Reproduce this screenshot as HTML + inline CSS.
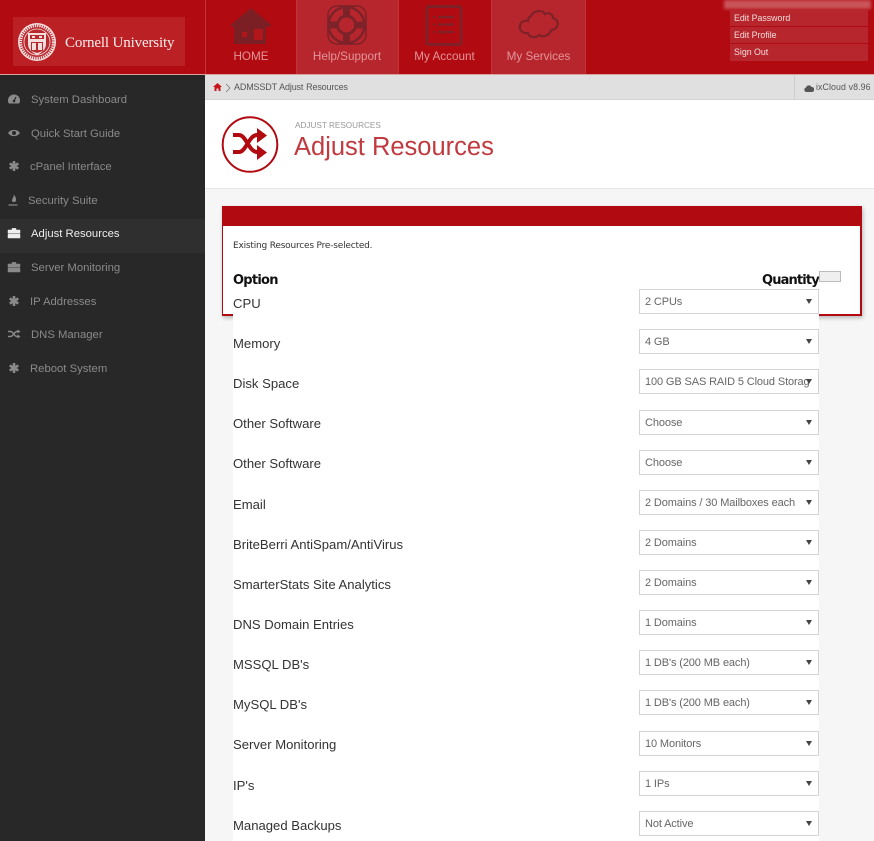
<!DOCTYPE html>
<html><head><meta charset="utf-8">
<style>
html,body{margin:0;padding:0}
body{width:874px;height:841px;position:relative;overflow:hidden;background:#f6f6f6;font-family:"Liberation Sans",sans-serif}
.a{position:absolute}
.t{position:absolute;white-space:nowrap}
.nav{position:absolute;top:0;height:74px;border-left:1px solid #c2343a;box-sizing:border-box}
.navl{position:absolute;top:49px;width:100%;text-align:center;font-size:11.7px;color:#e2969a;line-height:14px}
.side{position:absolute;left:0;width:205px;height:34px;font-size:11.3px;line-height:34px;color:#8a8a8a}
.side span{position:absolute;left:31px;top:0;white-space:nowrap}
.side svg{position:absolute;left:7px;top:9px}
.lab{position:absolute;left:233px;font-size:13.1px;line-height:16px;color:#333;white-space:nowrap}
.sel{position:absolute;left:639px;width:180px;height:25px;box-sizing:border-box;background:#fff;border:1px solid #d4d4d4;font-size:11px;line-height:24px;color:#666;padding-left:5px;letter-spacing:-.12px;white-space:nowrap;overflow:hidden}
.sel:after{content:"";position:absolute;right:6px;top:9px;border-left:3px solid transparent;border-right:3px solid transparent;border-top:5px solid #444}
.um{position:absolute;left:730px;width:138px;height:16px;background:#b6262c;color:#f3dcdc;font-size:8.800px;line-height:17px;text-indent:4px}
</style></head><body>

<!-- header -->
<div class="a" style="left:0;top:0;width:874px;height:75px;background:#b10a10;border-bottom:1px solid #d9a0a0;box-sizing:border-box"></div>
<div class="a" style="left:13px;top:17px;width:172px;height:49px;background:#ba2024"></div>
<svg class="a" style="left:17px;top:22px" width="40" height="40" viewBox="0 0 40 40">
<circle cx="20" cy="20" r="19" fill="#f3dede"/><circle cx="20" cy="20" r="17.6" fill="#b9282c"/><circle cx="20" cy="20" r="16.6" fill="none" stroke="#f3dede" stroke-width="3.4" stroke-dasharray="1.4 .9"/>
<circle cx="20" cy="20" r="13" fill="#b9282c" stroke="#f3dede" stroke-width=".8"/>
<path d="M11 11H29V22C29 28 24 31 20 33C16 31 11 28 11 22Z" fill="#f3dede"/>
<path d="M13 13H27V17H13ZM14 20H26V29L20 31L14 29Z" fill="#b9282c"/>
<path d="M15 14H18V16H15ZM22 14H25V16H22ZM15 21H19V28H15ZM21 21H25V28H21Z" fill="#f3dede"/>
</svg>
<div class="t" style="left:65px;top:35px;font-family:'Liberation Serif',serif;font-size:15px;line-height:17px;color:#fbeeee;letter-spacing:-.15px">Cornell University</div>

<div class="nav" style="left:205px;width:91px"></div>
<div class="navl" style="left:205px;width:91px;top:50px;text-indent:1px">HOME</div>
<svg class="a" style="left:230px;top:8px" width="43" height="38" viewBox="0 0 43 38">
<path d="M21 0L42 17.500L38 19H36V36H4V19H3L0 17.500Z" fill="#7c1f25"/>
<rect x="12" y="24" width="5" height="5" fill="#b1161b"/><rect x="24" y="21" width="9" height="11" fill="#b1161b"/>
</svg>

<div class="nav" style="left:296px;width:102px;background:#b7262c"></div>
<div class="navl" style="left:296px;width:102px;top:50px">Help/Support</div>
<svg class="a" style="left:326px;top:4px" width="42" height="42" viewBox="0 0 42 42" fill="none" stroke="#7c2228">
<rect x="2" y="2" width="38" height="38" rx="9" stroke-width="1.500"/>
<circle cx="20.500" cy="21" r="18" stroke-width="2.500"/><circle cx="20.500" cy="21" r="9" stroke-width="3"/>
<path d="M20.500 3V12M20.500 30V39M3 21H11.500M29.500 21H38" stroke-width="7"/>
</svg>

<div class="nav" style="left:398px;width:93px"></div>
<div class="navl" style="left:398px;width:93px;top:50px">My Account</div>
<svg class="a" style="left:425px;top:5px" width="38" height="42" viewBox="0 0 38 42" fill="none" stroke="#7c2228">
<rect x="2" y="1.500" width="34" height="38" rx="2" stroke-width="2.800"/>
<path d="M13 12H29M13 19.500H29M13 27H29" stroke-width="2.200"/>
<path d="M8 12H10.500M8 19.500H10.500M8 27H10.500" stroke-width="2"/>
</svg>

<div class="nav" style="left:491px;width:95px;background:#b7262c;border-right:1px solid #c2343a"></div>
<div class="navl" style="left:491px;width:95px;top:50px">My Services</div>
<svg class="a" style="left:518px;top:9px" width="42" height="30" viewBox="0 0 42 30" fill="none" stroke="#7c2228" stroke-width="2.200">
<path d="M13 7C15 2 24 0 27 5C31 3 35 5 35 9C39 10 41 14 39 17C38 20 35 21 33 21C32 26 25 29 21 26C17 30 11 28 10 24C5 25 1 21 2 17C2 13 7 11 10 12C10 10 11 8 13 7Z"/>
</svg>

<div class="a" style="left:724px;top:0;width:147px;height:9px;background:#c9555a;filter:blur(1.500px)"></div>
<div class="um" style="top:10px">Edit Password</div>
<div class="um" style="top:27px">Edit Profile</div>
<div class="um" style="top:44px;height:17px">Sign Out</div>

<!-- breadcrumb -->
<div class="a" style="left:205px;top:75px;width:669px;height:25px;background:#e0e0e0;border-bottom:1px solid #d2d2d2;box-sizing:border-box"></div>
<svg class="a" style="left:213px;top:83px" width="9" height="8" viewBox="0 0 9 8"><path d="M4.500 0L9 4H7.500V8H5.500V5.500H3.500V8H1.500V4H0Z" fill="#c8141a"/></svg>
<svg class="a" style="left:225px;top:83px" width="6" height="10" viewBox="0 0 6 10"><path d="M1 1L5 5L1 9" fill="none" stroke="#777" stroke-width=".8"/></svg>
<div class="t" style="left:234px;top:81px;font-size:9px;line-height:13px;color:#555;letter-spacing:-.15px;word-spacing:.5px">ADMSSDT Adjust Resources</div>
<div class="a" style="left:794px;top:75px;width:1px;height:24px;background:#cecece"></div>
<svg class="a" style="left:804px;top:84px" width="10" height="8" viewBox="0 0 10 8"><path d="M2.500 8A2.300 2.300 0 0 1 2 3.500A3 3 0 0 1 7.500 3A2.500 2.500 0 0 1 8 8Z" fill="#555"/></svg>
<div class="t" style="left:816px;top:81px;font-size:8.800px;line-height:13px;color:#555;letter-spacing:.1px">ixCloud v8.96</div>

<!-- title band -->
<div class="a" style="left:205px;top:100px;width:669px;height:89px;background:#fff;border-bottom:1px solid #e6e6e6;box-sizing:border-box"></div>
<svg class="a" style="left:221px;top:116px" width="58" height="58" viewBox="0 0 58 58" fill="none" stroke="#b10a10">
<circle cx="29" cy="28.500" r="27.300" stroke-width="2"/>
<path d="M12 19H18C25 19 28 36 36 36H38M12 36H18C25 36 28 19 36 19H38" stroke-width="4"/>
<path d="M36 12L46 19.500L36 27ZM36 29L46 36.500L36 44Z" fill="#b10a10" stroke="none"/>
</svg>
<div class="t" style="left:295px;top:120px;font-size:8.200px;line-height:12px;color:#999">ADJUST RESOURCES</div>
<div class="t" style="left:294px;top:131px;font-size:25.500px;line-height:32px;color:#c03a40;font-weight:normal">Adjust Resources</div>

<!-- sidebar -->
<div class="a" style="left:0;top:75px;width:205px;height:766px;background:#282828"></div>
<div class="a" style="left:0;top:75px;width:205px;height:5px;background:#252525"></div>
<div class="a" style="left:0;top:219px;width:205px;height:34px;background:#2f2f2f"></div>

<div class="side" style="top:83px"><svg width="14" height="14" viewBox="0 0 14 14"><path d="M7 2.500A6 6 0 0 0 1 9C1 10 1.500 11 2 11.500H12C12.500 11 13 10 13 9A6 6 0 0 0 7 2.500Z" fill="#8a8a8a"/><path d="M7 9L9 5" stroke="#282828" stroke-width="1.200"/><circle cx="7" cy="9" r="1.300" fill="#282828"/></svg><span>System Dashboard</span></div>
<div class="side" style="top:117px"><svg width="14" height="14" viewBox="0 0 14 14"><path d="M1 7C4 2.800 10 2.800 13 7C10 11.200 4 11.200 1 7Z" fill="#8a8a8a"/><circle cx="7" cy="7" r="2" fill="#282828"/></svg><span>Quick Start Guide</span></div>
<div class="side" style="top:150px"><svg width="14" height="14" viewBox="0 0 14 14" stroke="#8a8a8a" stroke-width="2.600"><path d="M7 2V12M2.700 4.500L11.300 9.500M11.300 4.500L2.700 9.500"/></svg><span style="left:30px">cPanel Interface</span></div>
<div class="side" style="top:184px"><svg width="14" height="14" viewBox="0 0 14 14"><path d="M7 1.500C8 3.500 9.500 5 9 7.500C8.700 9.500 5.500 9.500 5 8C4.700 6.500 6.500 4.500 7 1.500Z" fill="#8a8a8a"/><path d="M1.500 12H10.500" stroke="#8a8a8a" stroke-width="1.200"/></svg><span style="left:28px">Security Suite</span></div>
<div class="side" style="top:217px;color:#eee"><svg width="14" height="14" viewBox="0 0 14 14"><path d="M1 4H13V7.400H1ZM1 8.300H13V12H1ZM5 4V2.400H9V4" fill="#eee" stroke="#eee" stroke-width=".5"/></svg><span>Adjust Resources</span></div>
<div class="side" style="top:251px"><svg width="14" height="14" viewBox="0 0 14 14"><path d="M1 4H13V7.400H1ZM1 8.300H13V12H1ZM5 4V2.400H9V4" fill="#8a8a8a" stroke="#8a8a8a" stroke-width=".5"/></svg><span>Server Monitoring</span></div>
<div class="side" style="top:285px"><svg width="14" height="14" viewBox="0 0 14 14" stroke="#8a8a8a" stroke-width="2.600"><path d="M7 2V12M2.700 4.500L11.300 9.500M11.300 4.500L2.700 9.500"/></svg><span style="left:30px">IP Addresses</span></div>
<div class="side" style="top:318px"><svg width="14" height="14" viewBox="0 0 14 14" fill="none" stroke="#8a8a8a" stroke-width="1.500"><path d="M1 4.500H3.500C6.500 4.500 7 9.500 10 9.500H11M1 9.500H3.500C6.500 9.500 7 4.500 10 4.500H11"/><path d="M10.500 2.500L13.500 4.500L10.500 6.500ZM10.500 7.500L13.500 9.500L10.500 11.500Z" fill="#8a8a8a" stroke="none"/></svg><span>DNS Manager</span></div>
<div class="side" style="top:352px"><svg width="14" height="14" viewBox="0 0 14 14" stroke="#8a8a8a" stroke-width="2.600"><path d="M7 2V12M2.700 4.500L11.300 9.500M11.300 4.500L2.700 9.500"/></svg><span style="left:30px">Reboot System</span></div>

<!-- panel -->
<div class="a" style="left:222px;top:206px;width:640px;height:110px;box-sizing:border-box;background:#fff;border:1px solid #b10a10;border-width:1px 2px 2px 1px;box-shadow:1px 2px 4px rgba(0,0,0,.25)"></div>
<div class="a" style="left:222px;top:206px;width:640px;height:20px;background:#b10a10"></div>
<div class="t" style="left:233px;top:240px;font-family:'DejaVu Sans',sans-serif;font-size:9px;line-height:12px;color:#333;letter-spacing:-.2px">Existing Resources Pre-selected.</div>
<div class="a" style="left:233px;top:290px;width:586px;height:551px;background:#fff"></div>
<div class="t" style="left:233px;top:273px;font-family:'DejaVu Sans',sans-serif;font-weight:bold;font-size:13px;line-height:16px;color:#111;letter-spacing:-.75px">Option</div>
<div class="t" style="left:762px;top:273px;font-family:'DejaVu Sans',sans-serif;font-weight:bold;font-size:13px;line-height:16px;color:#111;letter-spacing:-.85px">Quantity</div>
<div class="a" style="left:819px;top:271px;width:22px;height:11px;box-sizing:border-box;background:#efefef;border:1px solid #bbb"></div>

<div class="lab" style="top:296px">CPU</div><div class="sel" style="top:289px">2 CPUs</div>
<div class="lab" style="top:336px">Memory</div><div class="sel" style="top:329px">4 GB</div>
<div class="lab" style="top:376px">Disk Space</div><div class="sel" style="top:369px">100 GB SAS RAID 5 Cloud Storag</div>
<div class="lab" style="top:416px">Other Software</div><div class="sel" style="top:410px">Choose</div>
<div class="lab" style="top:456px">Other Software</div><div class="sel" style="top:450px">Choose</div>
<div class="lab" style="top:497px">Email</div><div class="sel" style="top:490px">2 Domains / 30 Mailboxes each</div>
<div class="lab" style="top:537px">BriteBerri AntiSpam/AntiVirus</div><div class="sel" style="top:530px">2 Domains</div>
<div class="lab" style="top:577px">SmarterStats Site Analytics</div><div class="sel" style="top:570px">2 Domains</div>
<div class="lab" style="top:617px">DNS Domain Entries</div><div class="sel" style="top:610px">1 Domains</div>
<div class="lab" style="top:657px">MSSQL DB's</div><div class="sel" style="top:650px">1 DB's (200 MB each)</div>
<div class="lab" style="top:697px">MySQL DB's</div><div class="sel" style="top:690px">1 DB's (200 MB each)</div>
<div class="lab" style="top:737px">Server Monitoring</div><div class="sel" style="top:731px">10 Monitors</div>
<div class="lab" style="top:778px">IP's</div><div class="sel" style="top:771px">1 IPs</div>
<div class="lab" style="top:818px">Managed Backups</div><div class="sel" style="top:811px">Not Active</div>
</body></html>
